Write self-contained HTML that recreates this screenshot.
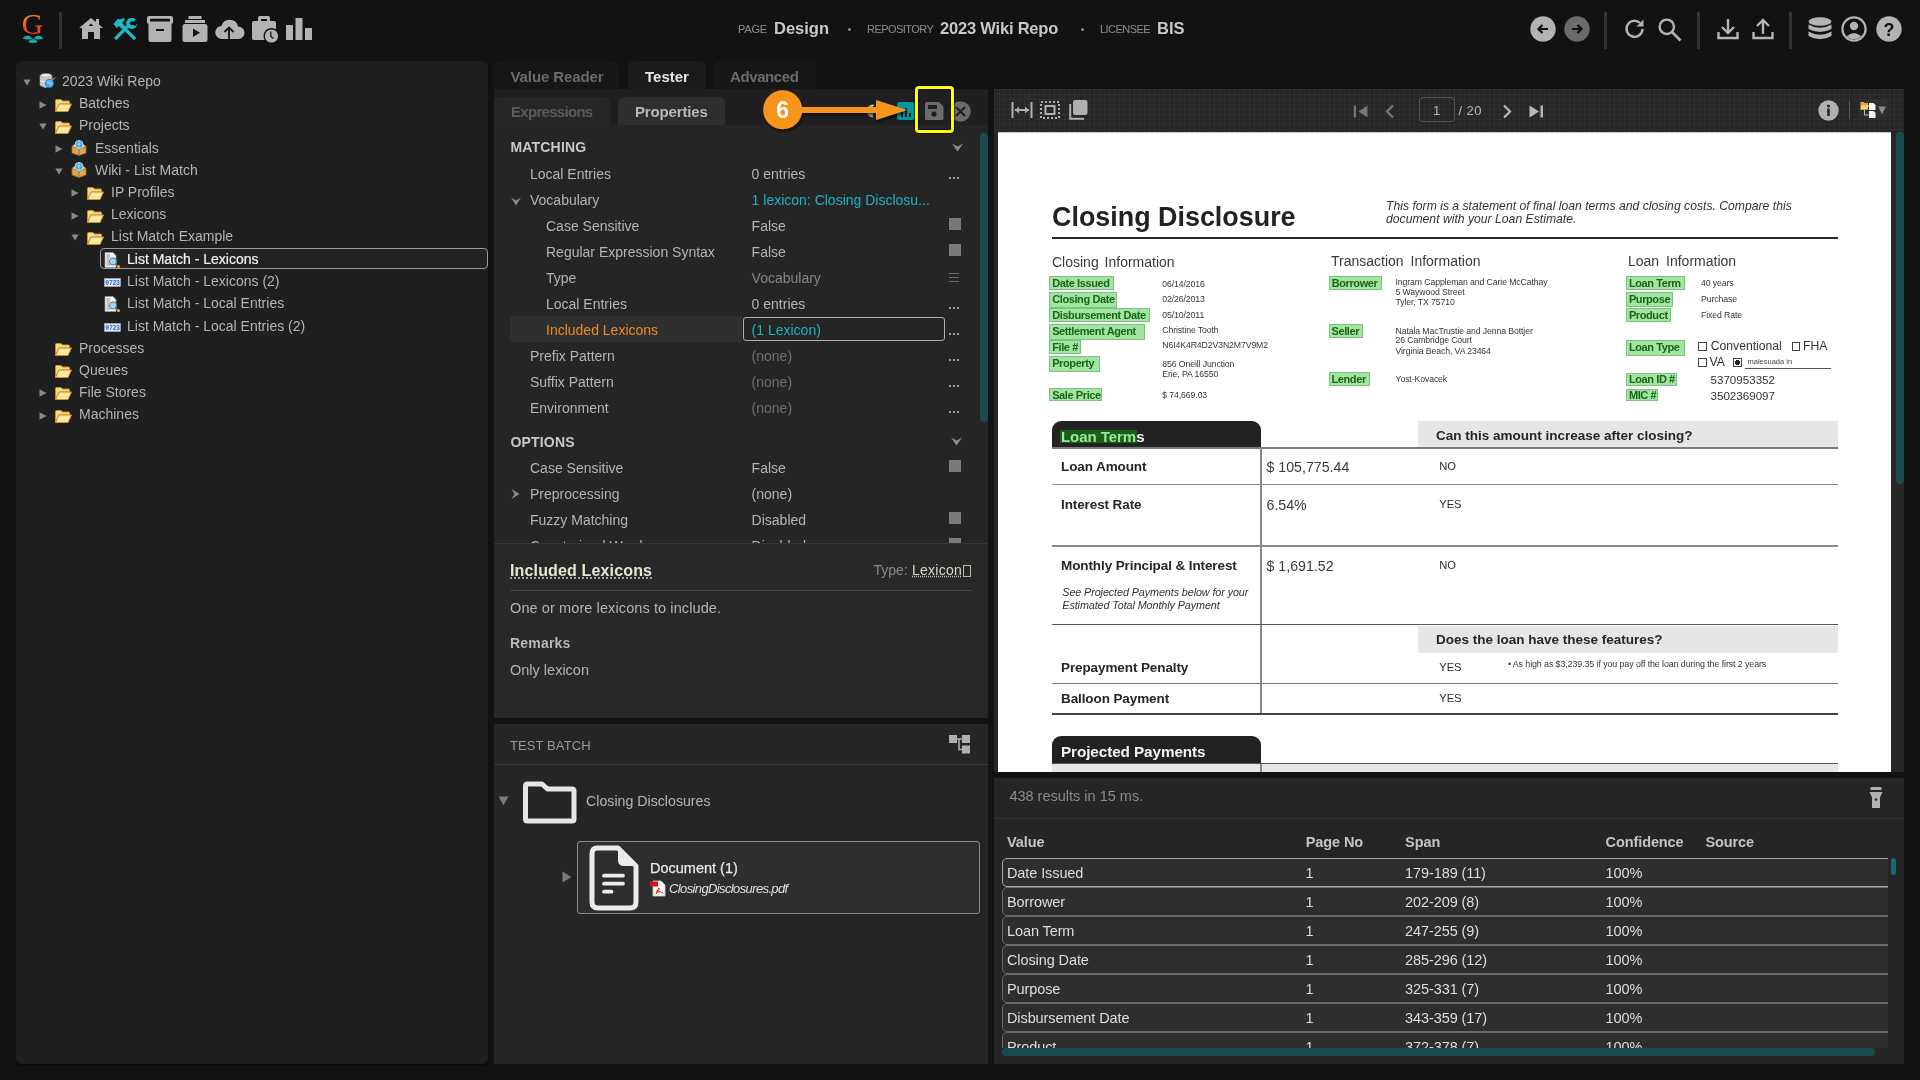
<!DOCTYPE html>
<html><head><meta charset="utf-8">
<style>
*{box-sizing:border-box;margin:0;padding:0}
html,body{width:1920px;height:1080px;overflow:hidden;background:#121212;font-family:"Liberation Sans",sans-serif;color:#b4b4b4}
.a{position:absolute}
.t{position:absolute;white-space:nowrap;line-height:1}
svg{position:absolute;overflow:visible}
#left{left:16px;top:61px;width:472px;height:1003px;background:#1f1f1f;border-radius:6px;box-shadow:0 1px 2px rgba(0,0,0,.6)}
#mid-tabs{left:494px;top:61px;width:494px;height:28px}
.tab{position:absolute;top:61px;height:28px;border-radius:6px 6px 0 0;background:#171717;font-weight:700;font-size:15px;color:#6e6e6e}
#props{left:494px;top:89px;width:494px;height:629px;background:#252525}
#props-head{left:494px;top:89px;width:494px;height:36px;background:#1f1f1f}
.stab{position:absolute;top:97px;height:28px;border-radius:6px 6px 0 0;background:#262626;font-weight:700;font-size:15px;color:#6e6e6e}
#batch{left:494px;top:724px;width:494px;height:340px;background:#252525}
#viewer-tb{left:994px;top:89px;width:910px;height:43px;background-color:#262626;background-image:linear-gradient(rgba(255,255,255,.03) 1px,transparent 1px),linear-gradient(90deg,rgba(255,255,255,.03) 1px,transparent 1px);background-size:5px 5px}
#viewer{left:994px;top:132px;width:910px;height:640px;background:#262626}
#page{left:998px;top:132px;width:893px;height:640px;background:#fff;overflow:hidden}
#results{left:994px;top:778px;width:910px;height:286px;background:#252525}
</style></head><body>
<div id="root" style="position:absolute;left:0;top:0;width:1920px;height:1080px;overflow:hidden;background:#121212;will-change:transform">
<svg width="0" height="0" style="position:absolute"><defs>
<symbol id="i-folder" viewBox="0 0 17 13"><path d="M0.5 1.5 Q0.5 0.5 1.5 0.5 H6 L7.5 2 H13.5 Q14.5 2 14.5 3 V5 H4 L0.5 12.5Z" fill="#f7d98a" stroke="#c8902a" stroke-width="1"/><path d="M4 5 H16.5 L13 12.5 H0.5Z" fill="#fde69a" stroke="#c8902a" stroke-width="1"/><path d="M3.2 8 H13.8" stroke="#fff6cc" stroke-width="1"/></symbol>
<symbol id="i-proj" viewBox="0 0 16 16"><path d="M1 6.5 L8 9 L15 6.5 V13 L8 15.5 L1 13Z" fill="#d9a85a" stroke="#9a6a2a" stroke-width="0.8"/><path d="M8 9 V15.5" stroke="#9a6a2a" stroke-width="0.8"/><path d="M1 6.5 L3 4.5 L8 6.5 L13 4.5 L15 6.5 L8 9Z" fill="#f0c878" stroke="#9a6a2a" stroke-width="0.6"/><circle cx="8" cy="4.5" r="4" fill="#3aa0e0" stroke="#e8f4ff" stroke-width="0.8"/><path d="M5.5 4 H10.5 M8 1 V8" stroke="#d0ecff" stroke-width="0.7"/></symbol>
<symbol id="i-db" viewBox="0 0 17 16"><ellipse cx="7" cy="3" rx="6" ry="2.5" fill="#e8e8e8" stroke="#9a9a9a" stroke-width="0.6"/><path d="M1 3 V12.5 Q7 16 13 12.5 V3 Q7 6 1 3Z" fill="#c8c8c8" stroke="#9a9a9a" stroke-width="0.6"/><path d="M1 7.8 Q7 10.8 13 7.8" stroke="#f0f0f0" stroke-width="0.9" fill="none"/><circle cx="10.5" cy="10.5" r="4.2" fill="#4aa8e8" stroke="#1a6ab8" stroke-width="0.7"/><path d="M8 8.5 L12.5 12.5 M9.5 7.5 L13.5 11" stroke="#dff" stroke-width="0.7"/><path d="M13 7.5 L16 4.5 M7.5 13 L5.5 15" stroke="#cfcfcf" stroke-width="1"/></symbol>
<symbol id="i-ipp" viewBox="0 0 17 16"><path d="M1 0.5 H9 L12 3.5 V15.5 H1Z" fill="#f4f4f4" stroke="#9a9a9a" stroke-width="0.7"/><path d="M2.5 3 H6 M2.5 5 H6 M2.5 7 H5 M2.5 9 H5 M2.5 11 H5 M2.5 13 H6" stroke="#777" stroke-width="0.8"/><circle cx="9" cy="9.5" r="3.6" fill="#9fd8f8" stroke="#4a6a8a" stroke-width="0.9"/><path d="M11.5 12 L14 14.5" stroke="#4a6a8a" stroke-width="1.4"/><circle cx="14.5" cy="14.5" r="1.6" fill="#f5a020"/></symbol>
<symbol id="i-lex" viewBox="0 0 17 9"><rect x="0.5" y="0.5" width="16" height="8" fill="#e8e8f4" stroke="#b0b0c8" stroke-width="0.6"/><text x="8.5" y="7" text-anchor="middle" font-family="Liberation Mono" font-weight="700" font-size="6.5" fill="#1a70c8" letter-spacing="-0.3">0723</text></symbol>
</defs></svg>
<!-- HEADER -->
<div class="a" style="left:0;top:0;width:1920px;height:56px;background:#121212"></div>
<svg style="left:19px;top:11px" width="28" height="34" viewBox="0 0 28 34">
<defs><linearGradient id="gg" x1="0" y1="0" x2="0" y2="1"><stop offset="0" stop-color="#f7a51c"/><stop offset="1" stop-color="#ec1c24"/></linearGradient></defs>
<text x="13.5" y="23" text-anchor="middle" font-family="Liberation Serif" font-size="29.5" fill="url(#gg)">G</text>
<path d="M3.5 27.5 Q8.5 21.5 13.5 27.5 Q8.5 29.5 3.5 27.5Z M14.5 27.5 Q19.5 21.5 24.5 27.5 Q19.5 29.5 14.5 27.5Z M9 31 Q14 25 19 31 Q14 33 9 31Z" fill="#17a9a6"/>
</svg>
<div class="a" style="left:59px;top:12px;width:3px;height:37px;background:#333"></div>
<!-- home -->
<svg style="left:78px;top:17px" width="26" height="23" viewBox="0 0 26 23"><path d="M13 1 L1 11 H4 V22 H10 V15 H16 V22 H22 V11 H25 L21 7.6 V2 H18 V5 Z M13 6.5 L15.5 9 H10.5 Z" fill="#b3b3b3" fill-rule="evenodd"/></svg>
<!-- tools -->
<svg style="left:113px;top:17px" width="25" height="25" viewBox="0 0 25 25"><g stroke="#1fb8c6" stroke-width="3.3" stroke-linecap="square"><path d="M3.2 20.8 L14.5 9.5"/><path d="M13.5 13.5 L21 21"/></g><circle cx="18.8" cy="6.3" r="5.6" fill="#1fb8c6"/><path d="M18.8 6.3 L24 1.1 L27 4 L21.8 9.2Z" fill="#121212"/><circle cx="18.8" cy="6.3" r="2" fill="#121212"/><path d="M0.5 7 L5 1.5 L7 2.5 L10.5 1 L12 2.5 L9 6 L13 10 L10 13 L6 9 L3.5 11Z" fill="#1fb8c6"/></svg>
<!-- archive -->
<svg style="left:147px;top:16px" width="26" height="26" viewBox="0 0 26 26"><path d="M2 0 H24 a2 2 0 0 1 2 2 V6 a2 2 0 0 1 -2 2 H2 a2 2 0 0 1 -2 -2 V2 a2 2 0 0 1 2 -2Z M3 2.8 V5.6 H23 V2.8Z" fill="#b3b3b3" fill-rule="evenodd"/><path d="M1.5 8 H24.5 V23.5 a2.5 2.5 0 0 1 -2.5 2.5 H4 a2.5 2.5 0 0 1 -2.5 -2.5Z M9 13 V15 H17 V13Z" fill="#b3b3b3" fill-rule="evenodd"/></svg>
<!-- play queue -->
<svg style="left:182px;top:16px" width="26" height="26" viewBox="0 0 26 26"><rect x="6.5" y="0" width="13" height="3" fill="#b3b3b3"/><rect x="3" y="4" width="20" height="3" fill="#b3b3b3"/><path d="M3 8 H23 a2.5 2.5 0 0 1 2.5 2.5 V23.5 a2.5 2.5 0 0 1 -2.5 2.5 H3 a2.5 2.5 0 0 1 -2.5 -2.5 V10.5 A2.5 2.5 0 0 1 3 8Z M11 12.5 V21 L18 16.8Z" fill="#b3b3b3" fill-rule="evenodd"/></svg>
<!-- cloud upload -->
<svg style="left:215px;top:18px" width="30" height="22" viewBox="0 0 30 22"><path d="M7 21 a6.5 6.5 0 0 1 -0.5 -13 a8.5 8.5 0 0 1 16.5 0.5 a6 6 0 0 1 0.5 12.5 Z" fill="#b3b3b3"/><path d="M14 21 V10 M9.5 14 L14 9.5 L18.5 14" stroke="#121212" stroke-width="1.8" fill="none"/></svg>
<!-- briefcase clock -->
<svg style="left:251px;top:16px" width="28" height="28" viewBox="0 0 28 28"><path d="M9 0 H17 a2 2 0 0 1 2 2 V5 H23 a2 2 0 0 1 2 2 V24 H3 a2 2 0 0 1 -2 -2 V7 a2 2 0 0 1 2 -2 H7 V2 A2 2 0 0 1 9 0Z M10 3 V5 H16 V3Z" fill="#b3b3b3" fill-rule="evenodd"/><circle cx="20.5" cy="20" r="8" fill="#121212"/><circle cx="20.5" cy="20" r="6.6" fill="#b3b3b3"/><path d="M19.8 15.5 V20.5 L22.5 22.5" stroke="#121212" stroke-width="1.3" fill="none"/></svg>
<!-- bar chart -->
<svg style="left:286px;top:17px" width="27" height="24" viewBox="0 0 27 24"><rect x="0" y="8" width="7" height="15" fill="#b3b3b3"/><rect x="9.5" y="1" width="7" height="22" fill="#b3b3b3"/><rect x="19" y="11" width="7" height="12" fill="#b3b3b3"/></svg>

<!-- center labels -->
<div class="t" style="left:738px;top:24px;font-size:11px;color:#8c8c8c;letter-spacing:-0.2px">PAGE</div>
<div class="t" style="left:774px;top:20px;font-size:16.5px;font-weight:700;color:#c8c8c8">Design</div>
<div class="a" style="left:847.5px;top:28px;width:3px;height:3px;border-radius:2px;background:#8c8c8c"></div>
<div class="t" style="left:867px;top:24px;font-size:11px;color:#8c8c8c;letter-spacing:-0.55px">REPOSITORY</div>
<div class="t" style="left:940px;top:20px;font-size:16.5px;font-weight:700;color:#c8c8c8;letter-spacing:-0.2px">2023 Wiki Repo</div>
<div class="a" style="left:1080.5px;top:28px;width:3px;height:3px;border-radius:2px;background:#8c8c8c"></div>
<div class="t" style="left:1100px;top:24px;font-size:11px;color:#8c8c8c;letter-spacing:-0.55px">LICENSEE</div>
<div class="t" style="left:1157px;top:20px;font-size:16.5px;font-weight:700;color:#c8c8c8">BIS</div>

<!-- right icons -->
<svg style="left:1530px;top:16px" width="26" height="26" viewBox="0 0 26 26"><circle cx="13" cy="13" r="12.7" fill="#b3b3b3"/><path d="M18 13 H8.5 M12.5 9 L8.5 13 L12.5 17" stroke="#111" stroke-width="2.2" fill="none"/></svg>
<svg style="left:1564px;top:16px" width="26" height="26" viewBox="0 0 26 26"><circle cx="13" cy="13" r="12.7" fill="#6b6b6b"/><path d="M8 13 H17.5 M13.5 9 L17.5 13 L13.5 17" stroke="#111" stroke-width="2.2" fill="none"/></svg>
<div class="a" style="left:1604px;top:12px;width:3px;height:37px;background:#333"></div>
<svg style="left:1623px;top:17px" width="24" height="24" viewBox="0 0 24 24"><path d="M19.5 12 A8 8 0 1 1 17 6" stroke="#b3b3b3" stroke-width="2.4" fill="none"/><path d="M20.5 2.5 V9.5 H13.5Z" fill="#b3b3b3"/></svg>
<svg style="left:1658px;top:18px" width="24" height="24" viewBox="0 0 24 24"><circle cx="8.8" cy="8.8" r="7.2" stroke="#b3b3b3" stroke-width="2.4" fill="none"/><path d="M14 14 L22.5 22.5" stroke="#b3b3b3" stroke-width="2.6"/></svg>
<div class="a" style="left:1697px;top:12px;width:3px;height:37px;background:#333"></div>
<svg style="left:1717px;top:18px" width="22" height="22" viewBox="0 0 22 22"><path d="M11 1 V15 M5 9 L11 15 L17 9" stroke="#b3b3b3" stroke-width="2.4" fill="none"/><path d="M1.5 14 V20 H20.5 V14" stroke="#b3b3b3" stroke-width="2.4" fill="none"/></svg>
<svg style="left:1752px;top:18px" width="22" height="22" viewBox="0 0 22 22"><path d="M11 16 V2 M5 8 L11 2 L17 8" stroke="#b3b3b3" stroke-width="2.4" fill="none"/><path d="M1.5 14 V20 H20.5 V14" stroke="#b3b3b3" stroke-width="2.4" fill="none"/></svg>
<div class="a" style="left:1789px;top:12px;width:3px;height:37px;background:#333"></div>
<svg style="left:1807px;top:17px" width="26" height="24" viewBox="0 0 26 24"><ellipse cx="13" cy="4.5" rx="11.5" ry="4.3" fill="#b3b3b3"/><path d="M1.5 7.5 Q13 14 24.5 7.5 V12 Q13 18 1.5 12Z" fill="#b3b3b3"/><path d="M1.5 14.5 Q13 21 24.5 14.5 V19 Q13 25.5 1.5 19Z" fill="#b3b3b3"/></svg>
<svg style="left:1841px;top:16px" width="26" height="26" viewBox="0 0 26 26"><circle cx="13" cy="13" r="11.6" stroke="#b3b3b3" stroke-width="2.2" fill="none"/><circle cx="13" cy="10" r="4.2" fill="#b3b3b3"/><path d="M5.5 20.5 Q13 13.5 20.5 20.5 Q13 26 5.5 20.5Z" fill="#b3b3b3"/></svg>
<svg style="left:1876px;top:16px" width="26" height="26" viewBox="0 0 26 26"><circle cx="13" cy="13" r="12.7" fill="#b3b3b3"/><text x="13" y="19.5" text-anchor="middle" font-family="Liberation Sans" font-weight="700" font-size="18" fill="#111">?</text></svg>

<div id="left" class="a"></div>
<!-- TREE -->
<div class="a" style="left:99.5px;top:248px;width:388px;height:21px;border:1px solid #9a9a9a;border-radius:4px;background:#232323"></div>
<svg style="left:23px;top:78.9px" width="8" height="7" viewBox="0 0 8 7"><path d="M0.3 0.5 H7.7 L4 6.5Z" fill="#8a8a8a"/></svg>
<svg style="left:39px;top:73.4px" width="17" height="16"><use href="#i-db"/></svg>
<div class="t" style="left:62px;top:74.05px;font-size:14px;">2023 Wiki Repo</div>
<svg style="left:39px;top:100.6px" width="8" height="8" viewBox="0 0 8 8"><path d="M0.5 0.3 L7.5 4 L0.5 7.7Z" fill="#8a8a8a"/></svg>
<svg style="left:55px;top:98.6px" width="17" height="13"><use href="#i-folder"/></svg>
<div class="t" style="left:79px;top:96.25px;font-size:14px;">Batches</div>
<svg style="left:39px;top:123.30000000000001px" width="8" height="7" viewBox="0 0 8 7"><path d="M0.3 0.5 H7.7 L4 6.5Z" fill="#8a8a8a"/></svg>
<svg style="left:55px;top:120.80000000000001px" width="17" height="13"><use href="#i-folder"/></svg>
<div class="t" style="left:79px;top:118.45px;font-size:14px;">Projects</div>
<svg style="left:55px;top:145.0px" width="8" height="8" viewBox="0 0 8 8"><path d="M0.5 0.3 L7.5 4 L0.5 7.7Z" fill="#8a8a8a"/></svg>
<svg style="left:71px;top:140.0px" width="16" height="16"><use href="#i-proj"/></svg>
<div class="t" style="left:95px;top:140.65px;font-size:14px;">Essentials</div>
<svg style="left:55px;top:167.7px" width="8" height="7" viewBox="0 0 8 7"><path d="M0.3 0.5 H7.7 L4 6.5Z" fill="#8a8a8a"/></svg>
<svg style="left:71px;top:162.2px" width="16" height="16"><use href="#i-proj"/></svg>
<div class="t" style="left:95px;top:162.85px;font-size:14px;">Wiki - List Match</div>
<svg style="left:71px;top:189.4px" width="8" height="8" viewBox="0 0 8 8"><path d="M0.5 0.3 L7.5 4 L0.5 7.7Z" fill="#8a8a8a"/></svg>
<svg style="left:87px;top:187.4px" width="17" height="13"><use href="#i-folder"/></svg>
<div class="t" style="left:111px;top:185.05px;font-size:14px;">IP Profiles</div>
<svg style="left:71px;top:211.6px" width="8" height="8" viewBox="0 0 8 8"><path d="M0.5 0.3 L7.5 4 L0.5 7.7Z" fill="#8a8a8a"/></svg>
<svg style="left:87px;top:209.6px" width="17" height="13"><use href="#i-folder"/></svg>
<div class="t" style="left:111px;top:207.25px;font-size:14px;">Lexicons</div>
<svg style="left:71px;top:234.3px" width="8" height="7" viewBox="0 0 8 7"><path d="M0.3 0.5 H7.7 L4 6.5Z" fill="#8a8a8a"/></svg>
<svg style="left:87px;top:231.8px" width="17" height="13"><use href="#i-folder"/></svg>
<div class="t" style="left:111px;top:229.45px;font-size:14px;">List Match Example</div>
<svg style="left:103.5px;top:251.60000000000002px" width="17" height="16"><use href="#i-ipp"/></svg>
<div class="t" style="left:127px;top:251.75px;font-size:14px;color:#f2f2f2;-webkit-text-stroke:0.2px #f2f2f2">List Match - Lexicons</div>
<svg style="left:103.5px;top:278.3px" width="17" height="9"><use href="#i-lex"/></svg>
<div class="t" style="left:127px;top:273.95px;font-size:14px;">List Match - Lexicons (2)</div>
<svg style="left:103.5px;top:296.0px" width="17" height="16"><use href="#i-ipp"/></svg>
<div class="t" style="left:127px;top:296.15px;font-size:14px;">List Match - Local Entries</div>
<svg style="left:103.5px;top:322.9px" width="17" height="9"><use href="#i-lex"/></svg>
<div class="t" style="left:127px;top:318.55px;font-size:14px;">List Match - Local Entries (2)</div>
<svg style="left:55px;top:342.9px" width="17" height="13"><use href="#i-folder"/></svg>
<div class="t" style="left:79px;top:340.55px;font-size:14px;">Processes</div>
<svg style="left:55px;top:365.1px" width="17" height="13"><use href="#i-folder"/></svg>
<div class="t" style="left:79px;top:362.75px;font-size:14px;">Queues</div>
<svg style="left:39px;top:389.3px" width="8" height="8" viewBox="0 0 8 8"><path d="M0.5 0.3 L7.5 4 L0.5 7.7Z" fill="#8a8a8a"/></svg>
<svg style="left:55px;top:387.3px" width="17" height="13"><use href="#i-folder"/></svg>
<div class="t" style="left:79px;top:384.95px;font-size:14px;">File Stores</div>
<svg style="left:39px;top:411.5px" width="8" height="8" viewBox="0 0 8 8"><path d="M0.5 0.3 L7.5 4 L0.5 7.7Z" fill="#8a8a8a"/></svg>
<svg style="left:55px;top:409.5px" width="17" height="13"><use href="#i-folder"/></svg>
<div class="t" style="left:79px;top:407.15px;font-size:14px;">Machines</div>
<div class="tab" style="left:494px;width:125px"></div>
<div class="tab" style="left:628px;width:78px;background:#1b1b1b"></div>
<div class="tab" style="left:714px;width:102px"></div>
<div id="props" class="a"></div>
<div id="props-head" class="a"></div>
<div class="stab" style="left:494px;width:116px"></div>
<div class="stab" style="left:618px;width:107px;background:#2e2e2e"></div>
<!-- MID TABS -->
<div class="t" style="left:510.5px;top:68.90px;font-size:15px;color:#6a6a6a;font-weight:700;letter-spacing:-0.1px">Value Reader</div>
<div class="t" style="left:645px;top:68.90px;font-size:15px;color:#e6e6e6;font-weight:700;">Tester</div>
<div class="t" style="left:730px;top:68.90px;font-size:15px;color:#6a6a6a;font-weight:700;letter-spacing:-0.4px">Advanced</div>
<div class="t" style="left:511px;top:103.70px;font-size:15px;color:#5a5a5a;font-weight:700;letter-spacing:-0.7px">Expressions</div>
<div class="t" style="left:635px;top:103.70px;font-size:15px;color:#b8b8b8;font-weight:700;letter-spacing:-0.15px">Properties</div>
<svg style="left:866px;top:104px" width="14" height="14" viewBox="0 0 14 14"><path d="M7 0.5 A6 6 0 0 0 7 13.5 Z" fill="#a8a8a8"/><path d="M3 4 Q5 1.5 8 1" stroke="#e0e0e0" stroke-width="1" fill="none"/></svg>
<div class="a" style="left:897px;top:102px;width:18px;height:18px;border-radius:3px;background:#00969e"></div>
<svg style="left:897px;top:102px" width="18" height="18" viewBox="0 0 18 18"><rect x="4" y="10" width="2" height="5" fill="#1c1c1c"/><rect x="8" y="6" width="2" height="9" fill="#1c1c1c"/><rect x="12" y="11" width="2" height="4" fill="#1c1c1c"/></svg>
<svg style="left:925px;top:102px" width="19" height="18" viewBox="0 0 19 18"><path d="M1.5 0 H14 L18.5 4.5 V16.5 A1.5 1.5 0 0 1 17 18 H1.5 A1.5 1.5 0 0 1 0 16.5 V1.5 A1.5 1.5 0 0 1 1.5 0Z M3 3 V7 H12 V3Z" fill="#6b6b6b" fill-rule="evenodd"/><circle cx="9" cy="12" r="2.6" fill="#1c1c1c"/></svg>
<svg style="left:949.5px;top:100.5px" width="21" height="21" viewBox="0 0 21 21"><circle cx="10.5" cy="10.5" r="10.2" fill="#6b6b6b"/><path d="M6 6 L15 15 M15 6 L6 15" stroke="#1c1c1c" stroke-width="1.8"/></svg>
<svg style="left:760px;top:86px" width="160" height="50" viewBox="760 86 160 50"><defs><filter id="sh" x="-20%" y="-50%" width="140%" height="200%"><feDropShadow dx="1" dy="2" stdDeviation="1.6" flood-color="#000" flood-opacity="0.7"/></filter></defs><g filter="url(#sh)"><path d="M800 107 H876 V100 L907 110 L876 120 V113 H800Z" fill="#f7941d"/><circle cx="782.7" cy="109.8" r="19.5" fill="#f7941d"/></g><text x="782.7" y="118.2" text-anchor="middle" font-family="Liberation Sans" font-weight="700" font-size="23" fill="#fff">6</text></svg>
<div class="a" style="left:915px;top:86px;width:39px;height:47px;border:3px solid #ffff00;border-radius:4px;box-shadow:0 0 0 1px rgba(0,0,30,.6), inset 0 0 0 1px rgba(0,0,30,.6)"></div>
<!-- PROPS -->
<div class="t" style="left:510.4px;top:140.25px;font-size:14px;color:#c8c8c8;font-weight:700;letter-spacing:0.2px">MATCHING</div>
<svg style="left:952px;top:143px" width="11" height="9" viewBox="0 0 11 9"><path d="M0 0.5 L5.5 3.5 L11 0.5 L5.5 8.5Z" fill="#8c8c8c"/></svg>
<div class="a" style="left:494px;top:125px;width:486px;height:418px;overflow:hidden">
<div class="t" style="left:36px;top:42.15px;font-size:14px;color:#b4b4b4;">Local Entries</div>
<div class="t" style="left:257.6px;top:42.15px;font-size:14px;color:#b4b4b4;">0 entries</div>
<div class="a" style="left:455px;top:52px;width:10px;height:2px;background:repeating-linear-gradient(90deg,#9a9a9a 0 2px,transparent 2px 4px)"></div>
<div class="t" style="left:36px;top:68.15px;font-size:14px;color:#b4b4b4;">Vocabulary</div>
<div class="t" style="left:257.6px;top:68.15px;font-size:14px;color:#1eb3bf;">1 lexicon: Closing Disclosu...</div>
<svg style="left:17px;top:71.5px" width="10" height="9" viewBox="0 0 10 9"><path d="M0 0.5 L5 3.5 L10 0.5 L5 8.5Z" fill="#8c8c8c"/></svg>
<div class="t" style="left:52px;top:94.15px;font-size:14px;color:#b4b4b4;">Case Sensitive</div>
<div class="t" style="left:257.6px;top:94.15px;font-size:14px;color:#b4b4b4;">False</div>
<div class="a" style="left:455px;top:92.5px;width:12px;height:12px;background:#7a7a7a"></div>
<div class="t" style="left:52px;top:120.15px;font-size:14px;color:#b4b4b4;">Regular Expression Syntax</div>
<div class="t" style="left:257.6px;top:120.15px;font-size:14px;color:#b4b4b4;">False</div>
<div class="a" style="left:455px;top:118.5px;width:12px;height:12px;background:#7a7a7a"></div>
<div class="t" style="left:52px;top:146.15px;font-size:14px;color:#b4b4b4;">Type</div>
<div class="t" style="left:257.6px;top:146.15px;font-size:14px;color:#858585;">Vocabulary</div>
<div class="a" style="left:455px;top:148.0px;width:10px;height:10px;background:repeating-linear-gradient(180deg,#6a6a6a 0 1px,transparent 1px 4px)"></div>
<div class="t" style="left:52px;top:172.15px;font-size:14px;color:#b4b4b4;">Local Entries</div>
<div class="t" style="left:257.6px;top:172.15px;font-size:14px;color:#b4b4b4;">0 entries</div>
<div class="a" style="left:455px;top:182px;width:10px;height:2px;background:repeating-linear-gradient(90deg,#9a9a9a 0 2px,transparent 2px 4px)"></div>
<div class="a" style="left:16px;top:191px;width:232px;height:26px;background:#2f2f2f"></div>
<div class="a" style="left:249px;top:192px;width:202px;height:24px;border:1px solid #b0b0b0;border-radius:3px;background:#252525"></div>
<div class="t" style="left:52px;top:198.15px;font-size:14px;color:#e8892a;">Included Lexicons</div>
<div class="t" style="left:257.6px;top:198.15px;font-size:14px;color:#1eb3bf;">(1 Lexicon)</div>
<div class="a" style="left:455px;top:208px;width:10px;height:2px;background:repeating-linear-gradient(90deg,#9a9a9a 0 2px,transparent 2px 4px)"></div>
<div class="t" style="left:36px;top:224.15px;font-size:14px;color:#b4b4b4;">Prefix Pattern</div>
<div class="t" style="left:257.6px;top:224.15px;font-size:14px;color:#6e6e6e;">(none)</div>
<div class="a" style="left:455px;top:234px;width:10px;height:2px;background:repeating-linear-gradient(90deg,#9a9a9a 0 2px,transparent 2px 4px)"></div>
<div class="t" style="left:36px;top:250.15px;font-size:14px;color:#b4b4b4;">Suffix Pattern</div>
<div class="t" style="left:257.6px;top:250.15px;font-size:14px;color:#6e6e6e;">(none)</div>
<div class="a" style="left:455px;top:260px;width:10px;height:2px;background:repeating-linear-gradient(90deg,#9a9a9a 0 2px,transparent 2px 4px)"></div>
<div class="t" style="left:36px;top:276.15px;font-size:14px;color:#b4b4b4;">Environment</div>
<div class="t" style="left:257.6px;top:276.15px;font-size:14px;color:#6e6e6e;">(none)</div>
<div class="a" style="left:455px;top:286px;width:10px;height:2px;background:repeating-linear-gradient(90deg,#9a9a9a 0 2px,transparent 2px 4px)"></div>
<div class="t" style="left:36px;top:336.15px;font-size:14px;color:#b4b4b4;">Case Sensitive</div>
<div class="t" style="left:257.6px;top:336.15px;font-size:14px;color:#b4b4b4;">False</div>
<div class="a" style="left:455px;top:334.5px;width:12px;height:12px;background:#7a7a7a"></div>
<div class="t" style="left:36px;top:362.15px;font-size:14px;color:#b4b4b4;">Preprocessing</div>
<div class="t" style="left:257.6px;top:362.15px;font-size:14px;color:#b4b4b4;">(none)</div>
<svg style="left:17px;top:364px" width="9" height="10" viewBox="0 0 9 10"><path d="M0.5 0 L8.5 5 L0.5 10 L3.5 5Z" fill="#8c8c8c"/></svg>
<div class="t" style="left:36px;top:388.15px;font-size:14px;color:#b4b4b4;">Fuzzy Matching</div>
<div class="t" style="left:257.6px;top:388.15px;font-size:14px;color:#b4b4b4;">Disabled</div>
<div class="a" style="left:455px;top:386.5px;width:12px;height:12px;background:#7a7a7a"></div>
<div class="t" style="left:36px;top:414.15px;font-size:14px;color:#b4b4b4;">Constrained Words</div>
<div class="t" style="left:257.6px;top:414.15px;font-size:14px;color:#b4b4b4;">Disabled</div>
<div class="a" style="left:455px;top:412.5px;width:12px;height:12px;background:#7a7a7a"></div>
<div class="t" style="left:16.399999999999977px;top:310.35px;font-size:14px;color:#c8c8c8;font-weight:700;letter-spacing:0.2px">OPTIONS</div>
<svg style="left:457px;top:312px" width="11" height="9" viewBox="0 0 11 9"><path d="M0 0.5 L5.5 3.5 L11 0.5 L5.5 8.5Z" fill="#8c8c8c"/></svg>
</div>
<div class="a" style="left:980px;top:133px;width:8px;height:289px;border-radius:4px;background:#1b4a4f"></div>
<div class="a" style="left:494px;top:543px;width:494px;height:175px;background:#282828;border-top:1px solid #363636"></div>
<div class="t" style="left:510px;top:563.46px;font-size:16px;color:#e6e6d2;font-weight:700;letter-spacing:0.15px;text-decoration:underline dotted #c8c8b0;text-underline-offset:1px">Included Lexicons</div>
<div class="t" style="left:873.5px;top:562.5px;font-size:14px;color:#8a8a8a;">Type:</div>
<div class="t" style="left:912px;top:562.5px;font-size:14px;color:#d8d8c8;text-decoration:underline dotted #c8c8b0;text-underline-offset:1px;letter-spacing:0.25px">Lexicon</div><div class="a" style="left:963px;top:565px;width:8px;height:12px;border:1px solid #b8b8a8"></div>
<div class="a" style="left:510px;top:590px;width:462px;height:1px;background:#444"></div>
<div class="t" style="left:510px;top:601.03px;font-size:14.5px;color:#b4b4b4;letter-spacing:0.1px">One or more lexicons to include.</div>
<div class="t" style="left:510px;top:635.65px;font-size:14px;color:#b8b8b8;font-weight:700;letter-spacing:0.2px">Remarks</div>
<div class="t" style="left:510px;top:662.73px;font-size:14.5px;color:#b4b4b4;">Only lexicon</div>
<div id="batch" class="a"></div>
<!-- BATCH -->
<div class="t" style="left:510px;top:739.00px;font-size:13px;color:#9a9a9a;letter-spacing:0.1px">TEST BATCH</div>
<svg style="left:949px;top:735px" width="22" height="19" viewBox="0 0 22 19"><rect x="0" y="0" width="8" height="8" fill="#b0b0b0"/><rect x="13" y="0" width="8" height="8" fill="#b0b0b0"/><rect x="13" y="10.5" width="8" height="8" fill="#b0b0b0"/><path d="M8 4 H13 M10 4 V14.5 H13" stroke="#b0b0b0" stroke-width="1.6" fill="none"/></svg>
<div class="a" style="left:494px;top:764px;width:494px;height:1px;background:#3a3a3a"></div>
<svg style="left:498px;top:796px" width="11" height="10" viewBox="0 0 11 10"><path d="M0.5 0.5 H10.5 L5.5 9.5Z" fill="#7a7a7a"/></svg>
<svg style="left:522px;top:780px" width="56" height="46" viewBox="0 0 56 46"><path d="M3.5 6 Q3.5 4 5.5 4 H20 L25.5 9 H50 Q52 9 52 11 V39 Q52 41 50 41 H5.5 Q3.5 41 3.5 39Z" fill="none" stroke="#e6e6e6" stroke-width="5" stroke-linejoin="round"/></svg>
<div class="t" style="left:586px;top:794.48px;font-size:14.2px;color:#b4b4b4;">Closing Disclosures</div>
<div class="a" style="left:577px;top:841px;width:403px;height:73px;border:1px solid #8a8a8a;border-radius:3px;background:#2e2e2e"></div>
<svg style="left:562px;top:871px" width="10" height="12" viewBox="0 0 10 12"><path d="M0.5 0.5 L9.5 6 L0.5 11.5Z" fill="#7a7a7a"/></svg>
<svg style="left:589px;top:845px" width="50" height="66" viewBox="0 0 50 66"><path d="M8 3 H29 L47 21 V57 Q47 63 41 63 H9 Q3 63 3 57 V9 Q3 3 8 3Z" fill="none" stroke="#ebebeb" stroke-width="5" stroke-linejoin="round"/><path d="M29 3 V15 Q29 21 35 21 H47Z" fill="#ebebeb"/><path d="M15 30.7 H34 M15 38.7 H34 M15 46.7 H22.5" stroke="#ebebeb" stroke-width="3.8" stroke-linecap="round"/></svg>
<div class="t" style="left:650px;top:860.73px;font-size:14.5px;color:#e8e8e8;-webkit-text-stroke:0.25px #e8e8e8">Document (1)</div>
<svg style="left:650px;top:880px" width="16" height="17" viewBox="0 0 16 17"><path d="M3 1 H11 L15 5 V16 H3Z" fill="#f4f4f4" stroke="#cfcfcf" stroke-width="0.8"/><rect x="0" y="1.5" width="8" height="5" fill="#d8141a"/><path d="M6 14 Q8 8 9 8 Q10 9 7 12 Q11 11 13 13" stroke="#d8141a" stroke-width="1" fill="none"/></svg>
<div class="t" style="left:669px;top:881.50px;font-size:13px;color:#e0e0e0;font-style:italic;letter-spacing:-0.62px">ClosingDisclosures.pdf</div>
<div id="viewer-tb" class="a"></div>
<div id="viewer" class="a"></div>
<div id="page" class="a">
<div class="a" style="left:0.0px;top:0.0px;width:893.0px;height:1.0px;background:#c8c8c8"></div>
<div class="t" style="left:54.0px;top:71.93px;font-size:26.9px;color:#222;font-weight:700;letter-spacing:0px">Closing Disclosure</div>
<div class="t" style="left:388.0px;top:67.67px;font-size:12.2px;color:#333;font-style:italic;letter-spacing:0px">This form is a statement of final loan terms and closing costs. Compare this</div>
<div class="t" style="left:388.0px;top:81.47px;font-size:12.2px;color:#333;font-style:italic">document with your Loan Estimate.</div>
<div class="a" style="left:54.0px;top:104.5px;width:786.0px;height:2.2px;background:#2a2a2a"></div>
<div class="t" style="left:54.0px;top:122.65px;font-size:14px;color:#3a3a3a;word-spacing:2px">Closing Information</div>
<div class="t" style="left:333.0px;top:122.35px;font-size:14px;color:#3a3a3a;word-spacing:3px">Transaction Information</div>
<div class="t" style="left:630.0px;top:122.35px;font-size:14px;color:#3a3a3a;word-spacing:3px">Loan Information</div>
<div class="a" style="left:52.2px;top:144.7px;width:62.5px;height:12.1px;background:#a2e4a2;box-shadow:0 0 0 1px #7cc47c"></div><div class="t" style="left:54.2px;top:145.79px;font-size:11px;color:#1a651a;font-weight:700;letter-spacing:-0.4px">Date Issued</div>
<div class="a" style="left:52.2px;top:161.0px;width:65.9px;height:13.5px;background:#a2e4a2;box-shadow:0 0 0 1px #7cc47c"></div><div class="t" style="left:54.2px;top:161.99px;font-size:11px;color:#1a651a;font-weight:700;letter-spacing:-0.4px">Closing Date</div>
<div class="a" style="left:52.2px;top:176.8px;width:98.8px;height:12.0px;background:#a2e4a2;box-shadow:0 0 0 1px #7cc47c"></div><div class="t" style="left:54.2px;top:177.89px;font-size:11px;color:#1a651a;font-weight:700;letter-spacing:-0.4px">Disbursement Date</div>
<div class="a" style="left:52.2px;top:192.7px;width:94.2px;height:14.0px;background:#a2e4a2;box-shadow:0 0 0 1px #7cc47c"></div><div class="t" style="left:54.2px;top:193.59px;font-size:11px;color:#1a651a;font-weight:700;letter-spacing:-0.4px">Settlement Agent</div>
<div class="a" style="left:52.2px;top:209.0px;width:30.0px;height:11.8px;background:#a2e4a2;box-shadow:0 0 0 1px #7cc47c"></div><div class="t" style="left:54.2px;top:209.69px;font-size:11px;color:#1a651a;font-weight:700;letter-spacing:-0.4px">File #</div>
<div class="a" style="left:52.2px;top:225.2px;width:49.2px;height:14.0px;background:#a2e4a2;box-shadow:0 0 0 1px #7cc47c"></div><div class="t" style="left:54.2px;top:225.79px;font-size:11px;color:#1a651a;font-weight:700;letter-spacing:-0.4px">Property</div>
<div class="a" style="left:52.2px;top:256.8px;width:50.8px;height:11.7px;background:#a2e4a2;box-shadow:0 0 0 1px #7cc47c"></div><div class="t" style="left:54.2px;top:258.09px;font-size:11px;color:#1a651a;font-weight:700;letter-spacing:-0.4px">Sale Price</div>
<div class="a" style="left:331.7px;top:145.3px;width:51.3px;height:11.3px;background:#a2e4a2;box-shadow:0 0 0 1px #7cc47c"></div><div class="t" style="left:333.7px;top:145.89px;font-size:11px;color:#1a651a;font-weight:700;letter-spacing:-0.4px">Borrower</div>
<div class="a" style="left:331.5px;top:193.0px;width:32.4px;height:11.6px;background:#a2e4a2;box-shadow:0 0 0 1px #7cc47c"></div><div class="t" style="left:333.5px;top:194.19px;font-size:11px;color:#1a651a;font-weight:700;letter-spacing:-0.4px">Seller</div>
<div class="a" style="left:331.5px;top:241.0px;width:39.4px;height:11.6px;background:#a2e4a2;box-shadow:0 0 0 1px #7cc47c"></div><div class="t" style="left:333.5px;top:241.99px;font-size:11px;color:#1a651a;font-weight:700;letter-spacing:-0.4px">Lender</div>
<div class="a" style="left:628.9px;top:145.0px;width:57.5px;height:12.0px;background:#a2e4a2;box-shadow:0 0 0 1px #7cc47c"></div><div class="t" style="left:630.9px;top:145.89px;font-size:11px;color:#1a651a;font-weight:700;letter-spacing:-0.4px">Loan Term</div>
<div class="a" style="left:628.9px;top:161.3px;width:45.0px;height:13.0px;background:#a2e4a2;box-shadow:0 0 0 1px #7cc47c"></div><div class="t" style="left:630.9px;top:161.99px;font-size:11px;color:#1a651a;font-weight:700;letter-spacing:-0.4px">Purpose</div>
<div class="a" style="left:628.9px;top:176.9px;width:43.6px;height:11.7px;background:#a2e4a2;box-shadow:0 0 0 1px #7cc47c"></div><div class="t" style="left:630.9px;top:177.89px;font-size:11px;color:#1a651a;font-weight:700;letter-spacing:-0.4px">Product</div>
<div class="a" style="left:628.9px;top:209.0px;width:56.8px;height:13.9px;background:#a2e4a2;box-shadow:0 0 0 1px #7cc47c"></div><div class="t" style="left:630.9px;top:209.79px;font-size:11px;color:#1a651a;font-weight:700;letter-spacing:-0.4px">Loan Type</div>
<div class="a" style="left:628.9px;top:241.6px;width:49.6px;height:11.0px;background:#a2e4a2;box-shadow:0 0 0 1px #7cc47c"></div><div class="t" style="left:630.9px;top:241.99px;font-size:11px;color:#1a651a;font-weight:700;letter-spacing:-0.4px">Loan ID #</div>
<div class="a" style="left:628.9px;top:257.6px;width:30.4px;height:10.6px;background:#a2e4a2;box-shadow:0 0 0 1px #7cc47c"></div><div class="t" style="left:630.9px;top:258.09px;font-size:11px;color:#1a651a;font-weight:700;letter-spacing:-0.4px">MIC #</div>
<div class="t" style="left:164.3px;top:147.54px;font-size:8.7px;color:#353535;letter-spacing:-0.1px">06/14/2016</div>
<div class="t" style="left:164.3px;top:163.44px;font-size:8.7px;color:#353535;letter-spacing:-0.1px">02/26/2013</div>
<div class="t" style="left:164.3px;top:179.34px;font-size:8.7px;color:#353535;letter-spacing:-0.1px">05/10/2011</div>
<div class="t" style="left:164.3px;top:194.34px;font-size:8.7px;color:#353535;letter-spacing:-0.1px">Christine Tooth</div>
<div class="t" style="left:164.3px;top:209.04px;font-size:8.7px;color:#353535;letter-spacing:-0.1px">N6I4K4R4D2V3N2M7V9M2</div>
<div class="t" style="left:164.3px;top:227.54px;font-size:8.7px;color:#353535;letter-spacing:-0.1px">856 Oneill Junction</div>
<div class="t" style="left:164.3px;top:238.14px;font-size:8.7px;color:#353535;letter-spacing:-0.1px">Erie, PA 16550</div>
<div class="t" style="left:164.3px;top:259.04px;font-size:8.7px;color:#353535;letter-spacing:-0.1px">$ 74,669.03</div>
<div class="t" style="left:397.5px;top:145.84px;font-size:8.7px;color:#353535;letter-spacing:-0.1px">Ingram Cappleman and Carie McCathay</div>
<div class="t" style="left:397.5px;top:155.94px;font-size:8.7px;color:#353535;letter-spacing:-0.1px">5 Waywood Street</div>
<div class="t" style="left:397.5px;top:166.14px;font-size:8.7px;color:#353535;letter-spacing:-0.1px">Tyler, TX 75710</div>
<div class="t" style="left:397.5px;top:194.64px;font-size:8.7px;color:#353535;letter-spacing:-0.1px">Natala MacTrustie and Jenna Bottjer</div>
<div class="t" style="left:397.5px;top:204.44px;font-size:8.7px;color:#353535;letter-spacing:-0.1px">26 Cambridge Court</div>
<div class="t" style="left:397.5px;top:215.04px;font-size:8.7px;color:#353535;letter-spacing:-0.1px">Virginia Beach, VA 23464</div>
<div class="t" style="left:397.5px;top:243.14px;font-size:8.7px;color:#353535;letter-spacing:-0.1px">Yost-Kovacek</div>
<div class="t" style="left:703.0px;top:147.24px;font-size:8.7px;color:#353535;letter-spacing:-0.1px">40 years</div>
<div class="t" style="left:703.0px;top:162.94px;font-size:8.7px;color:#353535;letter-spacing:-0.1px">Purchase</div>
<div class="t" style="left:703.0px;top:178.64px;font-size:8.7px;color:#353535;letter-spacing:-0.1px">Fixed Rate</div>
<div class="a" style="left:700.3px;top:210.4px;width:8.8px;height:8.4px;border:1px solid #444"></div>
<div class="t" style="left:712.7px;top:208.27px;font-size:12.2px;color:#333;">Conventional</div>
<div class="a" style="left:793.7px;top:210.4px;width:8.5px;height:8.4px;border:1px solid #444"></div>
<div class="t" style="left:805.0px;top:208.27px;font-size:12.2px;color:#333;">FHA</div>
<div class="a" style="left:700.3px;top:226.0px;width:8.8px;height:8.6px;border:1px solid #444"></div>
<div class="t" style="left:711.5px;top:224.07px;font-size:12.2px;color:#333;">VA</div>
<div class="a" style="left:734.8px;top:225.5px;width:9.5px;height:9.1px;border:1px solid #444;background:radial-gradient(#222 0 2.3px,#fff 2.6px)"></div>
<div class="t" style="left:749.5px;top:226.15px;font-size:7.5px;color:#444;">malesuada in</div>
<div class="a" style="left:747.0px;top:235.6px;width:86.0px;height:1.0px;background:#555"></div>
<div class="t" style="left:712.5px;top:242.28px;font-size:11.6px;color:#333;">5370953352</div>
<div class="t" style="left:712.5px;top:258.18px;font-size:11.6px;color:#333;">3502369097</div>
<div class="a" style="left:53.5px;top:289.4px;width:209.5px;height:26.6px;background:#222;border-radius:9px 9px 0 0"></div>
<div class="a" style="left:62.3px;top:297.6px;width:76.7px;height:13.8px;background:#1a5e1a"></div>
<div class="t" style="left:63.0px;top:296.60px;font-size:15px;color:#9be89b;font-weight:700;letter-spacing:-0.05px">Loan Term<span style="color:#f2f2f2">s</span></div>
<div class="a" style="left:420.0px;top:289.4px;width:420.0px;height:26.6px;background:#e6e6e6"></div>
<div class="t" style="left:438.0px;top:297.37px;font-size:13.5px;color:#262626;font-weight:700;">Can this amount increase after closing?</div>
<div class="a" style="left:53.5px;top:315.2px;width:786.5px;height:1.5px;background:#7a7a7a"></div>
<div class="a" style="left:262.3px;top:316.0px;width:1.5px;height:266.0px;background:#8a8a8a"></div>
<div class="t" style="left:63.0px;top:328.17px;font-size:13.5px;color:#262626;font-weight:700;letter-spacing:-0.1px">Loan Amount</div>
<div class="t" style="left:268.5px;top:327.98px;font-size:14.2px;color:#3a3a3a;">$ 105,775.44</div>
<div class="t" style="left:441.2px;top:329.12px;font-size:11.2px;color:#2a2a2a;">NO</div>
<div class="t" style="left:63.0px;top:365.87px;font-size:13.5px;color:#262626;font-weight:700;letter-spacing:-0.1px">Interest Rate</div>
<div class="t" style="left:268.5px;top:365.68px;font-size:14.2px;color:#3a3a3a;">6.54%</div>
<div class="t" style="left:441.2px;top:366.82px;font-size:11.2px;color:#2a2a2a;">YES</div>
<div class="t" style="left:63.0px;top:426.87px;font-size:13.5px;color:#262626;font-weight:700;letter-spacing:-0.1px">Monthly Principal &amp; Interest</div>
<div class="t" style="left:268.5px;top:426.68px;font-size:14.2px;color:#3a3a3a;">$ 1,691.52</div>
<div class="t" style="left:441.2px;top:427.82px;font-size:11.2px;color:#2a2a2a;">NO</div>
<div class="a" style="left:53.5px;top:351.6px;width:786.5px;height:1.4px;background:#8a8a8a"></div>
<div class="a" style="left:53.5px;top:413.3px;width:786.5px;height:1.4px;background:#8a8a8a"></div>
<div class="t" style="left:64.3px;top:454.86px;font-size:10.8px;color:#333;font-style:italic;letter-spacing:-0.1px">See Projected Payments below for your</div>
<div class="t" style="left:64.3px;top:467.56px;font-size:10.8px;color:#333;font-style:italic;letter-spacing:-0.1px">Estimated Total Monthly Payment</div>
<div class="a" style="left:53.5px;top:492.1px;width:786.5px;height:1.4px;background:#555"></div>
<div class="a" style="left:420.0px;top:493.5px;width:420.0px;height:27.0px;background:#e6e6e6"></div>
<div class="t" style="left:438.0px;top:500.57px;font-size:13.5px;color:#262626;font-weight:700;">Does the loan have these features?</div>
<div class="t" style="left:63.0px;top:528.57px;font-size:13.5px;color:#262626;font-weight:700;letter-spacing:-0.1px">Prepayment Penalty</div>
<div class="t" style="left:441.2px;top:529.52px;font-size:11.2px;color:#2a2a2a;">YES</div>
<div class="t" style="left:509.9px;top:527.72px;font-size:8.9px;color:#363636;letter-spacing:-0.1px">• As high as $3,239.35 if you pay off the loan during the first 2 years</div>
<div class="a" style="left:53.5px;top:550.6px;width:786.5px;height:1.4px;background:#7a7a7a"></div>
<div class="t" style="left:63.0px;top:560.07px;font-size:13.5px;color:#262626;font-weight:700;letter-spacing:-0.1px">Balloon Payment</div>
<div class="t" style="left:441.2px;top:561.02px;font-size:11.2px;color:#2a2a2a;">YES</div>
<div class="a" style="left:53.5px;top:581.0px;width:786.5px;height:1.6px;background:#444"></div>
<div class="a" style="left:53.5px;top:604.0px;width:209.5px;height:26.5px;background:#222;border-radius:9px 9px 0 0"></div>
<div class="t" style="left:63.0px;top:611.65px;font-size:15.3px;color:#f4f4f4;font-weight:700;letter-spacing:-0.1px">Projected Payments</div>
<div class="a" style="left:53.5px;top:630.5px;width:786.5px;height:1.5px;background:#555"></div>
<div class="a" style="left:53.5px;top:632.0px;width:786.5px;height:8.0px;background:#e6e6e6"></div>
<div class="a" style="left:262.3px;top:632.0px;width:1.5px;height:8.0px;background:#8a8a8a"></div>
</div>
<div id="results" class="a"></div>
<div class="a" style="left:1896px;top:132px;width:8px;height:352px;border-radius:4px;background:#1b4a4f"></div>
<!-- VIEWER TOOLBAR -->
<svg style="left:1011px;top:101px" width="22" height="18" viewBox="0 0 22 18"><path d="M1.5 1 V17 M20.5 1 V17" stroke="#b0b0b0" stroke-width="2"/><path d="M4 9 H18" stroke="#b0b0b0" stroke-width="2"/><path d="M4 9 L8 5.5 V12.5Z M18 9 L14 5.5 V12.5Z" fill="#b0b0b0"/></svg>
<svg style="left:1040px;top:101px" width="20" height="18" viewBox="0 0 20 18"><rect x="1" y="1" width="18" height="16" fill="none" stroke="#b0b0b0" stroke-width="2" stroke-dasharray="2 2"/><rect x="5.5" y="5" width="9" height="8" fill="none" stroke="#b0b0b0" stroke-width="2"/></svg>
<svg style="left:1069px;top:100px" width="19" height="20" viewBox="0 0 19 20"><rect x="4" y="0" width="14.5" height="15" rx="2" fill="#b0b0b0"/><path d="M1.2 4 V18.8 H15" stroke="#b0b0b0" stroke-width="2" fill="none"/></svg>
<svg style="left:1353px;top:105px" width="16" height="13" viewBox="0 0 16 13"><rect x="0.7" y="0.5" width="2.3" height="12" fill="#777"/><path d="M14.5 0.5 V12.5 L5.5 6.5Z" fill="#777"/></svg>
<svg style="left:1385px;top:105px" width="10" height="13" viewBox="0 0 10 13"><path d="M8 0.5 L2 6.5 L8 12.5" stroke="#777" stroke-width="2.2" fill="none"/></svg>
<div class="a" style="left:1419px;top:97px;width:36px;height:25px;border:1px solid #555;border-radius:4px"></div>
<div class="t" style="left:1433px;top:103.60px;font-size:13px;color:#b8b8b8;">1</div>
<div class="t" style="left:1458.5px;top:103.60px;font-size:13px;color:#b8b8b8;letter-spacing:0.4px">/ 20</div>
<svg style="left:1502px;top:105px" width="10" height="13" viewBox="0 0 10 13"><path d="M2 0.5 L8 6.5 L2 12.5" stroke="#b8b8b8" stroke-width="2.2" fill="none"/></svg>
<svg style="left:1529px;top:105px" width="16" height="13" viewBox="0 0 16 13"><path d="M0.5 0.5 V12.5 L10 6.5Z" fill="#b8b8b8"/><rect x="11.5" y="0.5" width="2.5" height="12" fill="#b8b8b8"/></svg>
<svg style="left:1818px;top:99.5px" width="21" height="21" viewBox="0 0 21 21"><circle cx="10.5" cy="10.5" r="10.2" fill="#b0b0b0"/><circle cx="10.5" cy="6" r="1.5" fill="#262626"/><rect x="9.2" y="8.5" width="2.6" height="7.5" fill="#262626"/></svg>
<div class="a" style="left:1849px;top:101px;width:1px;height:18px;background:#5a5a5a"></div>
<div class="a" style="left:1860px;top:99px;width:28px;height:19px;border-radius:4px;background:#2e2e2e"></div>
<svg style="left:1860px;top:99px" width="28" height="20" viewBox="0 0 28 20"><path d="M0.5 3 H3.5 L4.5 4 H8 V10.5 H0.5Z" fill="#e8a830"/><path d="M1.5 6 H8.5 L7.5 10.5 H0.5Z" fill="#f8d070"/><path d="M4.5 10.5 V16 H9 M8 7 H9" stroke="#c8c8c8" stroke-width="0.9" fill="none"/><path d="M9 4 H13.5 L15.5 6 V11 H9Z M9 12 H13.5 L15.5 14 V19 H9Z" fill="#f6f6f6"/><path d="M18 7.5 H26 L22 15Z" fill="#8a8a8a"/></svg>
<!-- RESULTS -->
<div class="t" style="left:1009.4px;top:788.53px;font-size:14.5px;color:#8c8c8c;">438 results in 15 ms.</div>
<svg style="left:1869px;top:787px" width="14" height="22" viewBox="0 0 14 22"><rect x="1.5" y="0" width="11" height="3" fill="#b0b0b0"/><path d="M0.5 5 H13.5 L11 10.5 V21 H3 V10.5Z" fill="#b0b0b0"/><circle cx="7" cy="12.5" r="1.3" fill="#252525"/></svg>
<div class="a" style="left:994px;top:818px;width:910px;height:1px;background:#333"></div>
<div class="t" style="left:1007px;top:835.23px;font-size:14.5px;color:#c4c4c4;font-weight:700;letter-spacing:-0.1px">Value</div>
<div class="t" style="left:1305.8px;top:835.23px;font-size:14.5px;color:#c4c4c4;font-weight:700;letter-spacing:-0.1px">Page No</div>
<div class="t" style="left:1405.1px;top:835.23px;font-size:14.5px;color:#c4c4c4;font-weight:700;letter-spacing:-0.1px">Span</div>
<div class="t" style="left:1605.6px;top:835.23px;font-size:14.5px;color:#c4c4c4;font-weight:700;letter-spacing:-0.1px">Confidence</div>
<div class="t" style="left:1705.4px;top:835.23px;font-size:14.5px;color:#c4c4c4;font-weight:700;letter-spacing:-0.1px">Source</div>
<div class="a" style="left:1002px;top:858px;width:886px;height:190px;overflow:hidden">
<div class="a" style="left:0;top:0.00px;width:920px;height:29px;border:1.5px solid #a8a8a8;border-radius:5px;background:#2e2e2e"></div>
<div class="t" style="left:5px;top:7.73px;font-size:14.5px;color:#dedede;letter-spacing:-0.1px">Date Issued</div>
<div class="t" style="left:303.5px;top:7.73px;font-size:14.5px;color:#dedede;letter-spacing:-0.1px">1</div>
<div class="t" style="left:403.0999999999999px;top:7.73px;font-size:14.5px;color:#dedede;letter-spacing:-0.1px">179-189 (11)</div>
<div class="t" style="left:603.5999999999999px;top:7.73px;font-size:14.5px;color:#dedede;letter-spacing:-0.1px">100%</div>
<div class="a" style="left:0;top:29.06px;width:920px;height:29px;border:1.5px solid #6a6a6a;border-radius:5px;background:#2e2e2e"></div>
<div class="t" style="left:5px;top:36.79px;font-size:14.5px;color:#dedede;letter-spacing:-0.1px">Borrower</div>
<div class="t" style="left:303.5px;top:36.79px;font-size:14.5px;color:#dedede;letter-spacing:-0.1px">1</div>
<div class="t" style="left:403.0999999999999px;top:36.79px;font-size:14.5px;color:#dedede;letter-spacing:-0.1px">202-209 (8)</div>
<div class="t" style="left:603.5999999999999px;top:36.79px;font-size:14.5px;color:#dedede;letter-spacing:-0.1px">100%</div>
<div class="a" style="left:0;top:58.12px;width:920px;height:29px;border:1.5px solid #6a6a6a;border-radius:5px;background:#2e2e2e"></div>
<div class="t" style="left:5px;top:65.85px;font-size:14.5px;color:#dedede;letter-spacing:-0.1px">Loan Term</div>
<div class="t" style="left:303.5px;top:65.85px;font-size:14.5px;color:#dedede;letter-spacing:-0.1px">1</div>
<div class="t" style="left:403.0999999999999px;top:65.85px;font-size:14.5px;color:#dedede;letter-spacing:-0.1px">247-255 (9)</div>
<div class="t" style="left:603.5999999999999px;top:65.85px;font-size:14.5px;color:#dedede;letter-spacing:-0.1px">100%</div>
<div class="a" style="left:0;top:87.18px;width:920px;height:29px;border:1.5px solid #6a6a6a;border-radius:5px;background:#2e2e2e"></div>
<div class="t" style="left:5px;top:94.91px;font-size:14.5px;color:#dedede;letter-spacing:-0.1px">Closing Date</div>
<div class="t" style="left:303.5px;top:94.91px;font-size:14.5px;color:#dedede;letter-spacing:-0.1px">1</div>
<div class="t" style="left:403.0999999999999px;top:94.91px;font-size:14.5px;color:#dedede;letter-spacing:-0.1px">285-296 (12)</div>
<div class="t" style="left:603.5999999999999px;top:94.91px;font-size:14.5px;color:#dedede;letter-spacing:-0.1px">100%</div>
<div class="a" style="left:0;top:116.24px;width:920px;height:29px;border:1.5px solid #6a6a6a;border-radius:5px;background:#2e2e2e"></div>
<div class="t" style="left:5px;top:123.97px;font-size:14.5px;color:#dedede;letter-spacing:-0.1px">Purpose</div>
<div class="t" style="left:303.5px;top:123.97px;font-size:14.5px;color:#dedede;letter-spacing:-0.1px">1</div>
<div class="t" style="left:403.0999999999999px;top:123.97px;font-size:14.5px;color:#dedede;letter-spacing:-0.1px">325-331 (7)</div>
<div class="t" style="left:603.5999999999999px;top:123.97px;font-size:14.5px;color:#dedede;letter-spacing:-0.1px">100%</div>
<div class="a" style="left:0;top:145.30px;width:920px;height:29px;border:1.5px solid #6a6a6a;border-radius:5px;background:#2e2e2e"></div>
<div class="t" style="left:5px;top:153.03px;font-size:14.5px;color:#dedede;letter-spacing:-0.1px">Disbursement Date</div>
<div class="t" style="left:303.5px;top:153.03px;font-size:14.5px;color:#dedede;letter-spacing:-0.1px">1</div>
<div class="t" style="left:403.0999999999999px;top:153.03px;font-size:14.5px;color:#dedede;letter-spacing:-0.1px">343-359 (17)</div>
<div class="t" style="left:603.5999999999999px;top:153.03px;font-size:14.5px;color:#dedede;letter-spacing:-0.1px">100%</div>
<div class="a" style="left:0;top:174.36px;width:920px;height:29px;border:1.5px solid #6a6a6a;border-radius:5px;background:#2e2e2e"></div>
<div class="t" style="left:5px;top:182.09px;font-size:14.5px;color:#dedede;letter-spacing:-0.1px">Product</div>
<div class="t" style="left:303.5px;top:182.09px;font-size:14.5px;color:#dedede;letter-spacing:-0.1px">1</div>
<div class="t" style="left:403.0999999999999px;top:182.09px;font-size:14.5px;color:#dedede;letter-spacing:-0.1px">372-378 (7)</div>
<div class="t" style="left:603.5999999999999px;top:182.09px;font-size:14.5px;color:#dedede;letter-spacing:-0.1px">100%</div>
</div>
<div class="a" style="left:1891px;top:858px;width:5px;height:17px;border-radius:3px;background:#1b6470"></div>
<div class="a" style="left:1002px;top:1048px;width:873px;height:8px;border-radius:4px;background:#1b4a4f"></div>
</div>
</body></html>
